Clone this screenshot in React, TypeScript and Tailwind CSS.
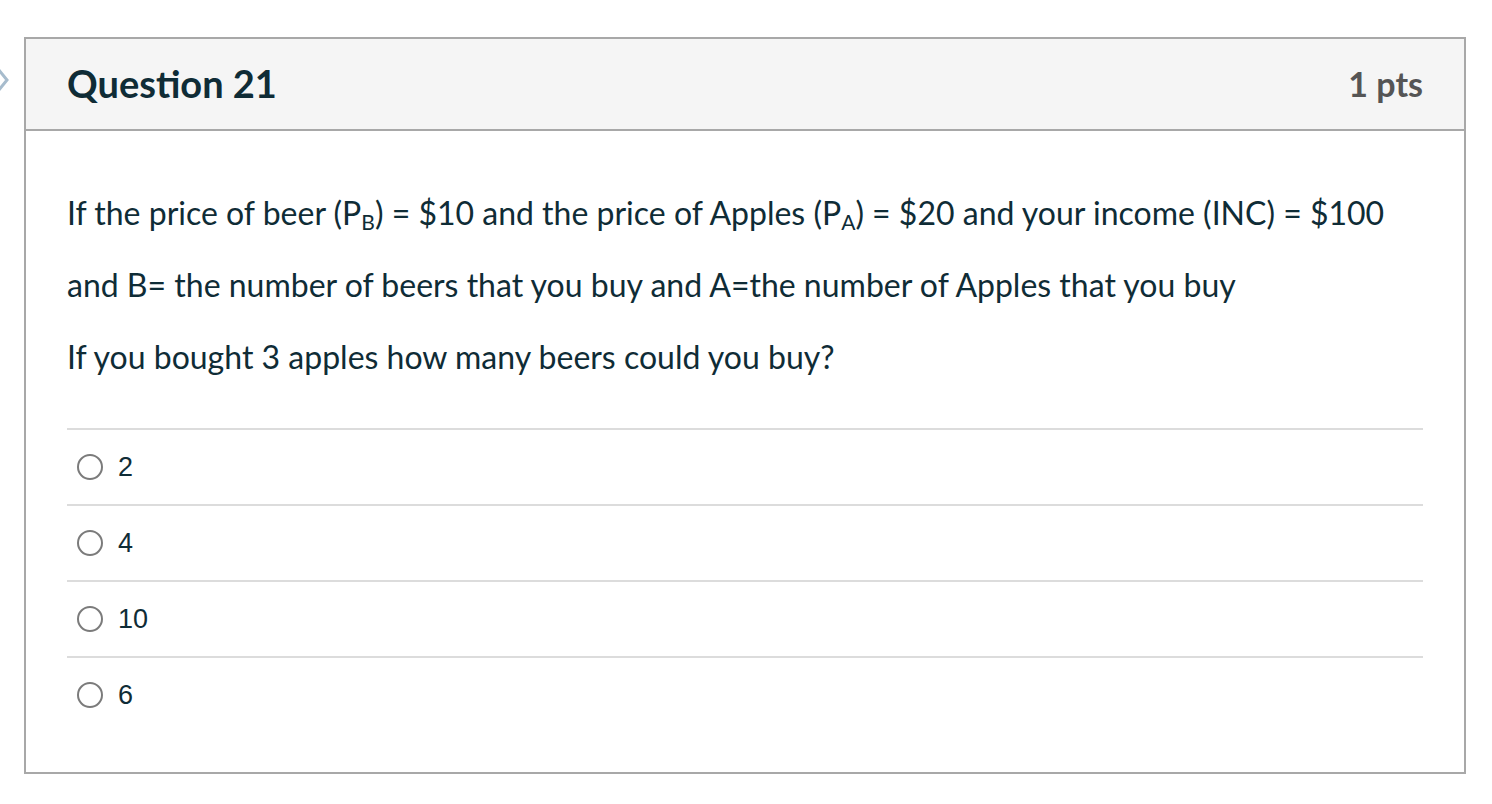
import React from 'react'

const answers = ['2', '4', '10', '6']

function Sub({ children }: { children: React.ReactNode }) {
  return <sub className="text-[21px] leading-none">{children}</sub>
}

export default function App() {
  return (
    <div className="relative min-h-[804px] w-[1492px] bg-white pt-[37px] font-['Lato','Noto_Sans',sans-serif] text-[#2d3b45]">
      {/* partially visible nav arrow at the left edge */}
      <svg className="absolute left-0 top-[67px]" width="10" height="26" viewBox="0 0 10 26">
        <polyline points="-2,2 7,13 -2,24" fill="none" stroke="#a7bccd" strokeWidth="3" />
      </svg>

      <div className="ml-[24px] w-[1442px] border-2 border-[#a8a8a8]">
        {/* header */}
        <div className="flex h-[92px] items-center justify-between border-b-2 border-[#a8a8a8] bg-[#f5f5f5] px-[41px] pb-[2px]">
          <h2 className="text-[38px] font-bold text-[#0f2c36]">Question 21</h2>
          <div className="text-[34px] font-bold text-[#555]">1 pts</div>
        </div>

        {/* body */}
        <div className="px-[41px] pb-[40px] pt-[64px]">
          <div className="text-[32px] leading-[36px] text-[#0f2c36]">
            <p className="mb-[36px]">
              If the price of beer (P<Sub>B</Sub>) = $10 and the price of Apples (P<Sub>A</Sub>) = $20 and your income (INC) = $100
            </p>
            <p className="mb-[36px]">and B= the number of beers that you buy and A=the number of Apples that you buy</p>
            <p>If you bought 3 apples how many beers could you buy?</p>
          </div>

          <div className="mt-[53px]">
            {answers.map((a) => (
              <div key={a} className="flex h-[76px] items-center border-t-2 border-[#dcdcdc] pl-[10px]">
                <span className="h-[26px] w-[26px] rounded-full border-2 border-[#7b7b7b] bg-white" />
                <span className="ml-[15px] font-['Liberation_Sans',Arial,sans-serif] text-[27px] text-[#0f2c36]">{a}</span>
              </div>
            ))}
          </div>
        </div>
      </div>
    </div>
  )
}
